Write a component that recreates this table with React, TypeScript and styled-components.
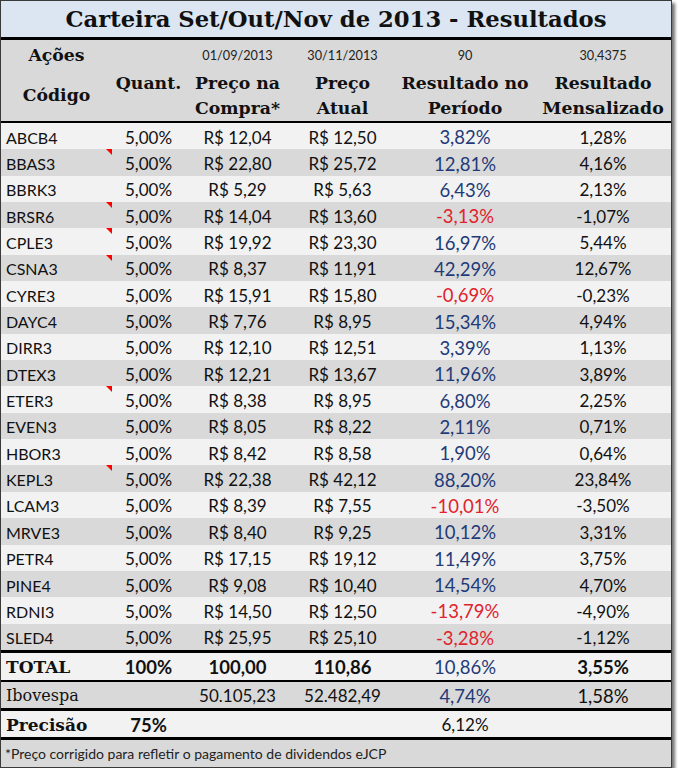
import styled, { createGlobalStyle } from "styled-components";

const GlobalStyle = createGlobalStyle`
    body {
        margin: 0;
        background: #ffffff;
    }
`

const serif = `"DejaVu Serif", "Liberation Serif", serif`;
const sans = `Lato, "Open Sans", sans-serif`;

const Sheet = styled.div`
    width: 670px;
    border: 1px solid #3a3a3a;
    box-shadow: 3px 3px 3px rgba(0, 0, 0, 0.55);
    background: #f2f2f2;
    color: #111111;
    font-family: ${sans};
`

const Title = styled.div`
    height: 36px;
    background: #dce6f2;
    border-bottom: 3px solid #000;
    display: flex;
    align-items: center;
    justify-content: center;
    font-family: ${serif};
    font-weight: 700;
    font-size: 22.7px;
`

const Row = styled.div<{ $shade?: "light" | "dark"; $height: number; $line?: number }>`
    display: grid;
    grid-template-columns: 111px 73px 105px 105px 140px 1fr;
    height: ${p => p.$height}px;
    align-items: center;
    background: ${p => (p.$shade === "dark" ? "#d9d9d9" : "#f2f2f2")};
    border-bottom: ${p => (p.$line ? `${p.$line}px solid #000` : "none")};
`

const Header = styled.div`
    display: grid;
    grid-template-columns: 111px 73px 105px 105px 140px 1fr;
    grid-template-rows: 30px 26px 25px;
    background: #d9d9d9;
    border-bottom: 2px solid #000;
    align-items: center;
`

const HeadCell = styled.div<{ $row: string; $col?: string }>`
    grid-row: ${p => p.$row};
    grid-column: ${p => p.$col ?? "auto"};
    text-align: center;
    font-family: ${serif};
    font-weight: 700;
    font-size: 17.3px;
    line-height: 25px;
    white-space: nowrap;
`

const DateCell = styled.div<{ $col: number }>`
    grid-row: 1;
    grid-column: ${p => p.$col};
    text-align: center;
    font-size: 12.7px;
    color: #222;
`

type Tone = "pos" | "neg";

const Cell = styled.div<{ $align?: "left" | "center"; $bold?: boolean; $tone?: Tone; $big?: boolean; $serif?: boolean }>`
    position: relative;
    height: 100%;
    box-sizing: border-box;
    padding-top: 2px;
    display: flex;
    align-items: center;
    justify-content: ${p => (p.$align === "left" ? "flex-start" : "center")};
    padding-left: ${p => (p.$align === "left" ? "5px" : "0")};
    font-family: ${p => (p.$serif ? serif : sans)};
    font-weight: ${p => (p.$bold ? 700 : 400)};
    font-size: ${p => (p.$serif ? (p.$bold ? "17px" : "16px") : p.$align === "left" ? "16px" : p.$big ? "18.5px" : "17px")};
    color: ${p => (p.$tone === "pos" ? "#1f3b78" : p.$tone === "neg" ? "#e0232c" : "#111")};
    white-space: nowrap;
`

const CommentMark = styled.span`
    position: absolute;
    top: 0;
    right: 0;
    width: 0;
    height: 0;
    border-top: 6px solid #ff0000;
    border-left: 6px solid transparent;
`

const Footnote = styled.div`
    height: 27px;
    display: flex;
    align-items: center;
    padding-left: 4px;
    background: #d9d9d9;
    font-size: 14px;
    color: #222;
`

type Stock = [string, string, string, string, string, boolean];

const stocks: Stock[] = [
    ["ABCB4", "R$ 12,04", "R$ 12,50", "3,82%", "1,28%", false],
    ["BBAS3", "R$ 22,80", "R$ 25,72", "12,81%", "4,16%", true],
    ["BBRK3", "R$ 5,29", "R$ 5,63", "6,43%", "2,13%", false],
    ["BRSR6", "R$ 14,04", "R$ 13,60", "-3,13%", "-1,07%", true],
    ["CPLE3", "R$ 19,92", "R$ 23,30", "16,97%", "5,44%", true],
    ["CSNA3", "R$ 8,37", "R$ 11,91", "42,29%", "12,67%", true],
    ["CYRE3", "R$ 15,91", "R$ 15,80", "-0,69%", "-0,23%", false],
    ["DAYC4", "R$ 7,76", "R$ 8,95", "15,34%", "4,94%", false],
    ["DIRR3", "R$ 12,10", "R$ 12,51", "3,39%", "1,13%", false],
    ["DTEX3", "R$ 12,21", "R$ 13,67", "11,96%", "3,89%", false],
    ["ETER3", "R$ 8,38", "R$ 8,95", "6,80%", "2,25%", true],
    ["EVEN3", "R$ 8,05", "R$ 8,22", "2,11%", "0,71%", false],
    ["HBOR3", "R$ 8,42", "R$ 8,58", "1,90%", "0,64%", false],
    ["KEPL3", "R$ 22,38", "R$ 42,12", "88,20%", "23,84%", true],
    ["LCAM3", "R$ 8,39", "R$ 7,55", "-10,01%", "-3,50%", false],
    ["MRVE3", "R$ 8,40", "R$ 9,25", "10,12%", "3,31%", false],
    ["PETR4", "R$ 17,15", "R$ 19,12", "11,49%", "3,75%", false],
    ["PINE4", "R$ 9,08", "R$ 10,40", "14,54%", "4,70%", false],
    ["RDNI3", "R$ 14,50", "R$ 12,50", "-13,79%", "-4,90%", false],
    ["SLED4", "R$ 25,95", "R$ 25,10", "-3,28%", "-1,12%", false],
];

const tone = (v: string): Tone => (v.startsWith("-") ? "neg" : "pos");

export default function App() {
    return (
        <>
            <GlobalStyle />
            <Sheet>
                <Title>Carteira Set/Out/Nov de 2013 - Resultados</Title>
                <Header>
                    <HeadCell $row="1" $col="1">Ações</HeadCell>
                    <DateCell $col={3}>01/09/2013</DateCell>
                    <DateCell $col={4}>30/11/2013</DateCell>
                    <DateCell $col={5}>90</DateCell>
                    <DateCell $col={6}>30,4375</DateCell>
                    <HeadCell $row="2 / 4" $col="1">Código</HeadCell>
                    <HeadCell $row="2" $col="2">Quant.</HeadCell>
                    <HeadCell $row="2 / 4" $col="3">Preço na<br />Compra*</HeadCell>
                    <HeadCell $row="2 / 4" $col="4">Preço<br />Atual</HeadCell>
                    <HeadCell $row="2 / 4" $col="5">Resultado no<br />Período</HeadCell>
                    <HeadCell $row="2 / 4" $col="6">Resultado<br />Mensalizado</HeadCell>
                </Header>
                {stocks.map(([code, buy, now, res, month, note], i) => (
                    <Row key={code} $shade={i % 2 ? "dark" : "light"} $height={i === stocks.length - 1 ? 26 : 26.35} $line={i === stocks.length - 1 ? 3 : 0}>
                        <Cell $align="left">
                            {code}
                            {note && <CommentMark />}
                        </Cell>
                        <Cell>5,00%</Cell>
                        <Cell>{buy}</Cell>
                        <Cell>{now}</Cell>
                        <Cell $big $tone={tone(res)}>{res}</Cell>
                        <Cell>{month}</Cell>
                    </Row>
                ))}
                <Row $height={27} $line={2}>
                    <Cell $align="left" $serif $bold>TOTAL</Cell>
                    <Cell $bold $big>100%</Cell>
                    <Cell $bold $big>100,00</Cell>
                    <Cell $bold $big>110,86</Cell>
                    <Cell $big $tone="pos">10,86%</Cell>
                    <Cell $bold $big>3,55%</Cell>
                </Row>
                <Row $shade="dark" $height={26} $line={3}>
                    <Cell $align="left" $serif>Ibovespa</Cell>
                    <Cell />
                    <Cell>50.105,23</Cell>
                    <Cell>52.482,49</Cell>
                    <Cell $big $tone="pos">4,74%</Cell>
                    <Cell $big>1,58%</Cell>
                </Row>
                <Row $height={26} $line={3}>
                    <Cell $align="left" $serif $bold>Precisão</Cell>
                    <Cell $bold $big>75%</Cell>
                    <Cell />
                    <Cell />
                    <Cell>6,12%</Cell>
                    <Cell />
                </Row>
                <Footnote>*Preço corrigido para refletir o pagamento de dividendos eJCP</Footnote>
            </Sheet>
        </>
    );
}
